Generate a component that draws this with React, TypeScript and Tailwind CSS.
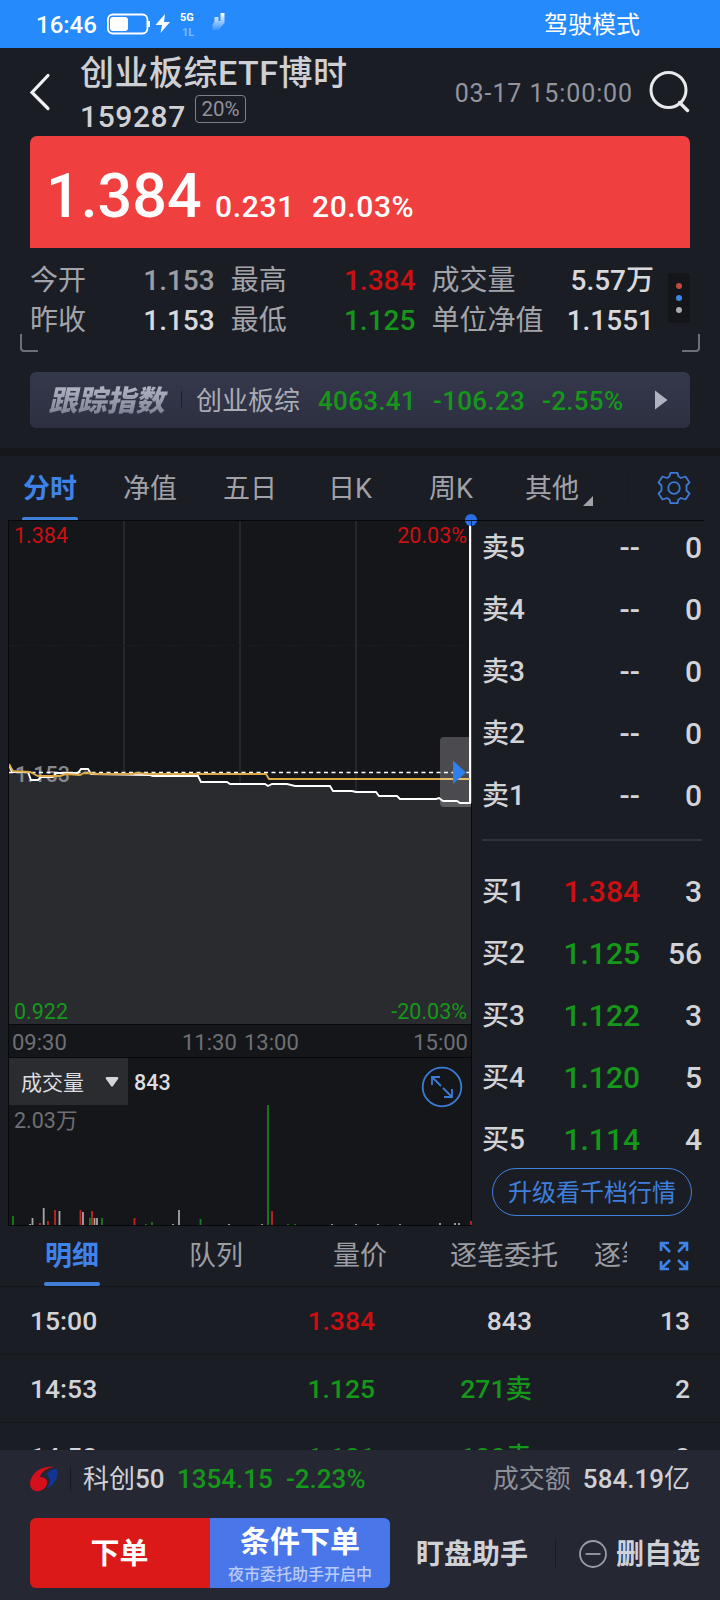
import React from "react";

const RED = "#cd0f12";
const GREEN = "#15971a";

function StatusBar() {
  return (
    <div className="flex h-12 items-center bg-[#258afc] pl-[36px] text-white">
      <span className="w-[71px] pt-px text-[24px] font-medium leading-none">16:46</span>
      <svg width="122" height="40" viewBox="0 0 122 40" className="block">
        <defs>
          <linearGradient id="fade" x1="0" y1="0" x2="0" y2="1">
            <stop offset="0" stopColor="#fff" />
            <stop offset="1" stopColor="#fff" stopOpacity="0.1" />
          </linearGradient>
        </defs>
        <rect x="0.9" y="10.5" width="39.500" height="19" rx="5" fill="none" stroke="#fff" strokeWidth="1.8" />
        <rect x="3" y="13" width="18" height="14" rx="3" fill="#fff" />
        <path d="M42 17v6" stroke="#fff" strokeWidth="2" />
        <path d="M58 10 48.500 21h6.500l-1.500 8L63 18h-6z" fill="#fff" />
        <text x="73" y="17" fontSize="11" fontWeight="700" fill="#fff">5G</text>
        <text x="75" y="32" fontSize="11" fontWeight="700" fill="#7dbaff">1L</text>
        <path d="M113.500 9h4v10l-6 7-6 0v-5l2-4v-4h4v4h2z" fill="url(#fade)" />
      </svg>
      <span className="ml-auto mr-[80px] pt-[2px] text-[24px] leading-none">驾驶模式</span>
    </div>
  );
}

function Header() {
  return (
    <div className="flex h-[88px] items-center pl-[29px] pr-[28px]">
      <svg width="22" height="38" viewBox="0 0 22 38" className="block">
        <path d="M19 2.500 3 19.500 19 35.500" fill="none" stroke="#f0f1f3" strokeWidth="3.200" strokeLinecap="round" />
      </svg>
      <div className="ml-[29px] flex h-full flex-col pt-[7px] text-[#ced0d4]">
        <div className="h-[37px] whitespace-nowrap text-[34px] font-medium leading-[37px] tracking-[0.500px]">创业板综ETF博时</div>
        <div className="flex">
          <span className="w-[115px] text-[30px] font-medium leading-[49px] tracking-[0.6px]">159287</span>
          <span className="mt-[3px] flex h-[28px] w-[51px] items-center justify-center rounded-[4px] border border-[#7c7f88] text-[20.500px] leading-none text-[#8f929a]">20%</span>
        </div>
      </div>
      <span className="ml-auto pt-[3px] text-[25px] leading-none tracking-[0.9px] text-[#92959e]">03-17 15:00:00</span>
      <svg width="44" height="44" viewBox="0 0 44 44" className="ml-[15px] block">
        <circle cx="20.500" cy="20" r="17.500" fill="none" stroke="#e8e9ec" strokeWidth="3" />
        <path d="M31.500 32.500 39.500 40.500" stroke="#e8e9ec" strokeWidth="3.400" strokeLinecap="round" />
      </svg>
    </div>
  );
}

function Price() {
  return (
    <div className="mx-[30px] flex h-[112px] items-baseline rounded-t-[7px] bg-[#ef403f] pl-[16px] pt-[25px] text-white">
      <span className="w-[169px] text-[61px] font-medium leading-[70px]">1.384</span>
      <span className="w-[97px] text-[30px] font-medium tracking-[0.700px]">0.231</span>
      <span className="text-[30px] font-medium tracking-[0.600px]">20.03%</span>
    </div>
  );
}

const stats = [
  ["今开", "1.153", "text-[#9b9da3]", "最高", "1.384", "text-[#cd0f12]", "成交量", "5.57万"],
  ["昨收", "1.153", "text-[#d8d9dc]", "最低", "1.125", "text-[#15971a]", "单位净值", "1.1551"],
];

function Stats() {
  return (
    <div className="flex h-[104px] px-[20px] pt-[13px]">
      <div className="flex w-[18px] flex-col justify-end">
        <div className="h-[18px] w-[18px] rounded-bl-[4px] border-b-2 border-l-2 border-[#6d6f76]" />
      </div>
      <div className="-ml-[8px] w-[624px]">
        {stats.map((s) => (
          <div key={s[0]} className="flex h-[40px] items-center text-[28px] leading-none text-[#a2a4aa]">
            <span className="w-[86px]">{s[0]}</span>
            <span className={`w-[99px] text-right font-medium ${s[2]}`}>{s[1]}</span>
            <span className="ml-[16px] w-[86px]">{s[3]}</span>
            <span className={`w-[99px] text-right font-medium ${s[5]}`}>{s[4]}</span>
            <span className="ml-[16px] w-[120px] whitespace-nowrap">{s[6]}</span>
            <span className="w-[103px] text-right font-medium text-[#d8d9dc]">{s[7]}</span>
          </div>
        ))}
      </div>
      <div className="ml-[14px] mt-[12px] flex h-[50px] w-[22px] flex-col items-center justify-center gap-[6px] rounded-[3px] bg-[#14161a]">
        <i className="h-[6px] w-[6px] rounded-full bg-[#c04a40]" />
        <i className="h-[6px] w-[6px] rounded-full bg-[#3d86e8]" />
        <i className="h-[6px] w-[6px] rounded-full bg-[#a9abb0]" />
      </div>
      <div className="-ml-[8px] flex w-[18px] flex-col justify-end">
        <div className="h-[18px] w-[18px] rounded-br-[4px] border-b-2 border-r-2 border-[#6d6f76]" />
      </div>
    </div>
  );
}

function IndexBar() {
  return (
    <div className="mx-[30px] mb-[20px] mt-[20px] flex h-[56px] items-center rounded-[6px] bg-gradient-to-b from-[#34384b] to-[#2d3041] pl-[21px] text-[26px] leading-none">
      <span className="w-[130px] -skew-x-12 bg-gradient-to-b from-[#c0c3d0] to-[#73778a] bg-clip-text pt-[2px] text-[29px] font-black leading-[40px] text-transparent">跟踪指数</span>
      <i className="h-[18px] w-px bg-[#1d2030]" />
      <span className="ml-[14px] w-[122px] pt-[2px] text-[#a9acb5]">创业板综</span>
      <span className="w-[115px] pt-[2px] font-medium tracking-[0.3px] text-[#15971a]">4063.41</span>
      <span className="w-[109px] pt-[2px] font-medium tracking-[0.3px] text-[#15971a]">-106.23</span>
      <span className="pt-[2px] font-medium tracking-[0.3px] text-[#15971a]">-2.55%</span>
      <svg width="13" height="20" viewBox="0 0 13 20" className="ml-auto mr-[22px] block">
        <path d="M0 0.500 12.500 10 0 19.500z" fill="#aeb3c1" />
      </svg>
    </div>
  );
}

function ChartTabs() {
  return (
    <div className="flex h-[64px] text-[27px] leading-[66px] text-[#a0a2a8]">
      <div className="flex w-[123px] flex-col pl-[22px] font-bold text-[#3f83ea]">
        <span className="h-[61px] pl-px">分时</span>
        <i className="h-[3px] w-[56px] rounded-t-[2px] bg-[#3f7fd8]" />
      </div>
      <span className="w-[100px]">净值</span>
      <span className="w-[105px]">五日</span>
      <span className="w-[101px]">日K</span>
      <span className="w-[96px]">周K</span>
      <span className="w-[58px]">其他</span>
      <svg width="10" height="10" viewBox="0 0 10 10" className="mt-[40px] block">
        <path d="M10 0v10H0z" fill="#a0a2a8" />
      </svg>
      <i className="ml-[34px] mt-[18px] h-[28px] w-px bg-[#181a20]" />
      <svg width="36" height="36" viewBox="-18 -18 36 36" className="ml-[28px] mt-[14px] block" fill="none" stroke="#3b7bd4" strokeWidth="1.800">
        <path strokeLinejoin="round" d="M-3.500-15.200H3.500L4.500-11.500Q6-10.800 7-10L11.500-11.500 15.500-5.500 12.500-2.500V2.500L15.500 5.500 11.500 11.500 7 10Q6 10.800 4.500 11.500L3.500 15.200H-3.500L-4.500 11.500Q-6 10.800-7 10L-11.500 11.500-15.500 5.500-12.500 2.500V-2.500L-15.500-5.500-11.500-11.500-7-10Q-6-10.800-4.500-11.500Z" />
        <circle r="5.800" />
      </svg>
    </div>
  );
}

const priceLine =
  "9,765 12,772 28,772 31,780 38,780 41,777 53,777 56,773 78,773 81,769 88,769 91,774 150,775 153,776 198,776 201,782 227,782 230,784 265,784 268,786 272,784 287,784 295,786 330,786 333,791 352,791 356,792 376,792 379,796 397,796 400,799 408,799 436,799 439,798 443,801 457,801 460,803 468,803 470,803 470,522";

function PriceChart() {
  return (
    <svg width="478" height="705" viewBox="0 520 478 705" className="block overflow-visible">
      <rect x="8" y="520" width="464" height="705" fill="#15161a" />
      <path d="M124 520V1024M240 520V1024M356 520V1024" stroke="#25272b" strokeWidth="2" />
      <path d="M9 645.500H471" stroke="#1b1c20" strokeDasharray="6 4" />
      <polygon points="9,765 12,772 28,772 31,780 38,780 41,777 53,777 56,773 78,773 81,769 88,769 91,774 150,775 198,776 201,782 227,782 230,784 287,784 295,786 330,786 333,791 376,792 379,796 397,796 400,799 439,798 443,801 457,801 460,803 471,803 471,1024 9,1024" fill="#2a2b2f" />
      <text x="15" y="782" fontSize="21.500" fontWeight="500" fill="#88898d">1.153</text>
      <path d="M9 772.500H471" stroke="#fff" strokeWidth="1.300" strokeDasharray="4 3.500" />
      <polyline points={priceLine} fill="none" stroke="#fff" strokeWidth="1.900" />
      <polyline points="9,764 13,771 30,772 38,776 60,776 66,774 80,775 84,773 100,774 133,774 136,773 150,774 266,774 269,779 471,779" fill="none" stroke="#dca945" strokeWidth="1.900" />
      <path d="M472 737H444q-4 0-4 4V803q0 4 4 4H472z" fill="#fff" fillOpacity="0.230" />
      <path d="M453 760.500 466 772.500 453 784z" fill="#2f7fec" />
      <path d="M8.500 520V1225M471.500 520V1225M8 520.500H704M8 1024.500H472M8 1057.500H472M8 1225.500H472" stroke="#07080a" fill="none" />
      <circle cx="471" cy="520" r="6" fill="#2b6fe6" />
      <path d="M465 520.500H477M471.500 520V526" stroke="#0d1830" />
      <path d="M470.500 526V803" stroke="#fff" strokeWidth="1.500" />
      <g fontSize="21.500">
        <text x="14" y="543" fill={RED}>1.384</text>
        <text x="467" y="543" textAnchor="end" fill={RED}>20.03%</text>
        <text x="14" y="1019" fill={GREEN}>0.922</text>
        <text x="467" y="1019" textAnchor="end" fill={GREEN}>-20.03%</text>
      </g>
      <g fontSize="22" fill="#6e7075">
        <text x="12" y="1050">09:30</text>
        <text x="182" y="1050">11:30</text>
        <text x="244" y="1050">13:00</text>
        <text x="468" y="1050" textAnchor="end">15:00</text>
        <text x="14" y="1128" fontSize="21.500">2.03万</text>
      </g>
      <rect x="9" y="1058" width="119" height="47" fill="#2b2c30" />
      <text x="21" y="1090" fontSize="21" fill="#dcdde0">成交量</text>
      <path d="M107 1077h10q2 0 1 2l-5 7q-1 1.500-2 0l-5-7q-1-2 1-2z" fill="#d4d5d8" />
      <text x="134" y="1090" fontSize="21.500" fontWeight="500" fill="#dcdde0">843</text>
      <g fill="none" stroke="#3b7bd4" strokeWidth="1.800">
        <circle cx="442" cy="1087" r="19.300" />
        <path d="M432 1085v-8h8M432 1077l9 9M443 1088l9 9M452 1089v8h-8" />
      </g>
      <path d="M268 1105V1225M13 1216V1225M90 1218V1225M102 1218V1225M200.500 1219V1225M152 1222V1225M146 1224V1225M288 1224V1225M295 1224V1225" stroke="#1d7a20" strokeWidth="1.800" />
      <path d="M55 1210V1225M48 1221V1225M40 1223V1225M80.500 1210V1225M92 1211V1225M134.500 1218V1225M272 1211V1225M471 1221V1225" stroke="#c22520" strokeWidth="1.800" />
      <path d="M43.700 1208V1225M59.500 1211V1225M32.500 1218V1225M83 1212V1225M179 1210V1225M94.500 1218V1225M97 1218V1225M30 1224V1225M173 1224V1225M262 1224V1225M229 1224V1225M332 1224V1225M356 1224V1225M378 1224V1225M400 1224V1225M440 1223V1225M455 1223V1225M459 1223V1225" stroke="#a5a5a8" strokeWidth="1.800" />
    </svg>
  );
}

const asks = ["卖5", "卖4", "卖3", "卖2", "卖1"];
const bids = [
  ["买1", "1.384", "3", "text-[#cd0f12]"],
  ["买2", "1.125", "56", "text-[#15971a]"],
  ["买3", "1.122", "3", "text-[#15971a]"],
  ["买4", "1.120", "5", "text-[#15971a]"],
  ["买5", "1.114", "4", "text-[#15971a]"],
];

function BookRow({ a, b, c, tone }: { a: string; b: string; c: string; tone: string }) {
  return (
    <div className="flex h-[62px] items-center text-[30px] leading-none text-[#d2d3d6]">
      <span className="w-[61px] whitespace-nowrap text-[28px]"><span className="text-[27px]">{a[0]}</span>{a[1]}</span>
      <span className={`w-[97px] text-right ${tone}`}>{b}</span>
      <span className="w-[62px] text-right">{c}</span>
    </div>
  );
}

function Book() {
  return (
    <div className="ml-[4px] flex w-[220px] flex-col font-medium">
      <div className="-mt-[3px]">
        {asks.map((a) => <BookRow key={a} a={a} b="--" c="0" tone="text-[#d2d3d6]" />)}
      </div>
      <div className="mt-[12px] h-[2px] bg-[#30333b]" />
      <div className="mt-[20px]">
        {bids.map((r) => <BookRow key={r[0]} a={r[0]} b={r[1]} c={r[2]} tone={r[3]} />)}
      </div>
      <div className="-mt-[3px] ml-[10px] flex h-[48px] w-[200px] items-center justify-center rounded-full border border-[#3f7fdc] pt-px text-[24px] font-normal leading-none text-[#3f7fdc]">升级看千档行情</div>
    </div>
  );
}

function DetailTabs() {
  return (
    <div className="flex h-[62px] border-b border-[#14151a] text-[27px] leading-[63px] text-[#9c9ea4]">
      <div className="flex w-[189px] flex-col pl-[44px] font-bold text-[#3f83ea]">
        <span className="h-[57px] pl-px">明细</span>
        <i className="h-[4px] w-[56px] rounded-[2px] bg-[#3f7fd8]" />
      </div>
      <span className="w-[144px]">队列</span>
      <span className="w-[117px]">量价</span>
      <span className="w-[144px]">逐笔委托</span>
      <span className="w-[33px] overflow-hidden whitespace-nowrap">逐笔成交</span>
      <svg width="30" height="30" viewBox="0 0 30 30" className="ml-[32px] mt-[16px] block" fill="none" stroke="#3f83ea" strokeWidth="2.600">
        <path d="M2 10V2h8M2 2l9 9M20 2h8v8M28 2l-9 9M2 20v8h8M2 28l9-9M20 28h8v-8M28 28l-9-9" />
      </svg>
    </div>
  );
}

const trades = [
  ["15:00", "1.384", "text-[#cd0f12]", "843", "text-[#d2d3d6]", "13"],
  ["14:53", "1.125", "text-[#15971a]", "271卖", "text-[#15971a]", "2"],
  ["14:52", "1.121", "text-[#15971a]", "180卖", "text-[#15971a]", "8"],
];

function Trades() {
  return (
    <div className="h-[163px] overflow-hidden">
      {trades.map((t) => (
        <div key={t[0]} className="flex h-[68px] items-center border-b border-[#15171c] px-[30px] pt-[2px] text-[26.500px] font-medium leading-none text-[#d2d3d6]">
          <span className="w-[145px]">{t[0]}</span>
          <span className={`w-[200px] text-right ${t[2]}`}>{t[1]}</span>
          <span className={`w-[157px] text-right ${t[4]}`}>{t[3]}</span>
          <span className="ml-auto">{t[5]}</span>
        </div>
      ))}
    </div>
  );
}

function Footer() {
  return (
    <div className="h-[150px] bg-[#252733]">
      <div className="flex h-[56px] items-center px-[30px] pt-px text-[26px] leading-none">
        <svg width="30" height="28" viewBox="0 0 30 28" className="block">
          <path d="M24 2C13 0 1 7 0 18c0 6 4 9 9 8 5-1 9-5 8-10-1-3-4-4-7-4 1-5 7-9 14-10z" fill="#d5101c" />
          <path d="M27 4c2 8-2 16-11 20 4-5 5-9 2-13-3-3 3-7 9-7z" fill="#123594" />
        </svg>
        <i className="ml-[10px] h-[24px] w-px bg-[#191b23]" />
        <span className="ml-[12px] w-[94px] whitespace-nowrap text-[#cfd0d4]">科创<span className="font-medium">50</span></span>
        <span className="w-[109px] font-medium text-[#15971a]">1354.15</span>
        <span className="font-medium text-[#15971a]">-2.23%</span>
        <span className="ml-auto text-[#8e9098]">成交额</span>
        <span className="ml-[12px] text-[#cfd0d4]"><span className="font-medium">584.19</span>亿</span>
      </div>
      <div className="mt-[12px] flex h-[70px] items-center pl-[30px] text-[28px] font-bold leading-none text-[#d0d1d5]">
        <div className="flex h-[70px] w-[180px] items-center justify-center rounded-l-[6px] bg-[#db1919] pr-px pt-[2px] text-[29px] text-white">下单</div>
        <div className="flex h-[70px] w-[180px] flex-col items-center rounded-r-[6px] bg-[#4977e9] pt-[8px] text-[30px] text-white">
          <span className="leading-[32px]">条件下单</span>
          <span className="mt-[9px] text-[16px] font-medium text-[#b8caf7]">夜市委托助手开启中</span>
        </div>
        <span className="ml-[26px] w-[139px] pt-[3px]">盯盘助手</span>
        <i className="h-[28px] w-px bg-[#191b23]" />
        <svg width="28" height="28" viewBox="0 0 28 28" className="ml-[23px] mt-px block" fill="none" stroke="#9b9da4" strokeWidth="1.800">
          <circle cx="14" cy="14" r="13" />
          <path d="M6.500 14h15" />
        </svg>
        <span className="ml-[9px] whitespace-nowrap pt-[3px]">删自选</span>
      </div>
    </div>
  );
}

export default function App() {
  return (
    <div className="h-[1600px] w-[720px] overflow-hidden bg-[#1b1d25] font-['Roboto','Noto_Sans_CJK_SC',sans-serif]">
      <StatusBar />
      <Header />
      <Price />
      <Stats />
      <IndexBar />
      <div className="h-[8px] bg-[#16171b]" />
      <ChartTabs />
      <div className="flex h-[705px]">
        <PriceChart />
        <Book />
      </div>
      <DetailTabs />
      <Trades />
      <Footer />
    </div>
  );
}
